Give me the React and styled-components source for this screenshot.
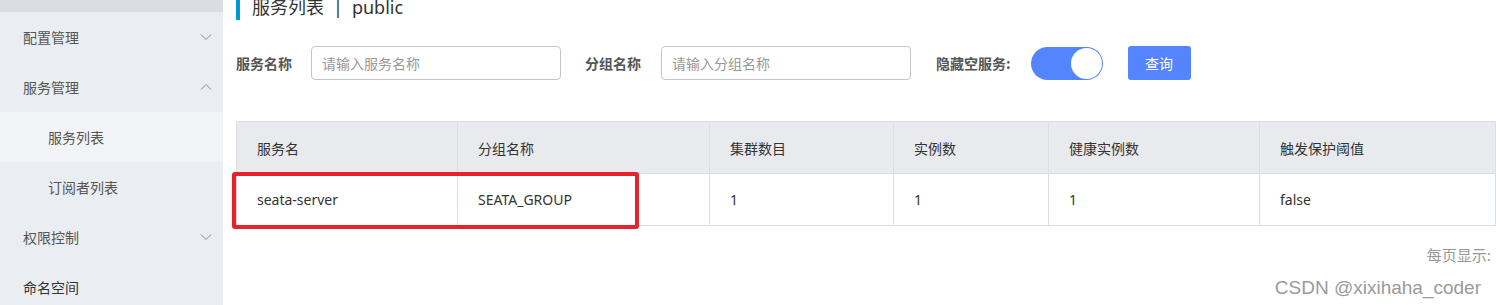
import React from "react";
import styled, { createGlobalStyle } from "styled-components";

const Global = createGlobalStyle`
  html, body { margin: 0; padding: 0; background: #fff; overflow: hidden; }
  body { font-family: "Noto Sans", "Noto Sans CJK SC", sans-serif; }
  * { box-sizing: border-box; }
`;

const Page = styled.div`
  display: flex;
  width: 1496px;
  height: 305px;
  position: relative;
  overflow: hidden;
`;

const Sidebar = styled.nav`
  width: 223px;
  flex: none;
  background: #eaedf1;
  display: flex;
  flex-direction: column;
`;

const SideTop = styled.div`
  height: 12px;
  flex: none;
  background: #dadee4;
`;

const SideItem = styled.div`
  height: 50px;
  flex: none;
  display: flex;
  align-items: center;
  justify-content: space-between;
  padding: 0 11px 0 ${(p) => (p.$sub ? 48 : 23)}px;
  font-size: 14px;
  color: ${(p) => (p.$strong ? "#333" : "#555")};
  background: ${(p) => (p.$active ? "#f2f3f6" : "transparent")};
  font-family: "Noto Sans CJK SC", sans-serif;
`;

const Chevron = ({ up }) => (
  <svg width="12" height="8" viewBox="0 0 12 8">
    <polyline
      points={up ? "1,6.5 6,1.5 11,6.5" : "1,1.5 6,6.5 11,1.5"}
      fill="none"
      stroke="#888"
      strokeWidth="1"
    />
  </svg>
);

const Main = styled.main`
  flex: 1;
  padding: 0 2px 0 13px;
  display: flex;
  flex-direction: column;
`;

const Title = styled.h1`
  margin: -3px 0 0;
  height: 23px;
  border-left: 4px solid #0099cc;
  padding-left: 12px;
  font-size: 18px;
  font-weight: normal;
  line-height: 21px;
  color: #333;
  font-family: "Noto Sans", "Noto Sans CJK SC", sans-serif;
  display: flex;
  gap: 9px;
`;

const Divider = styled.span`
  color: #333;
`;

const Filters = styled.div`
  display: flex;
  align-items: center;
  margin-top: 26px;
  height: 34px;
`;

const Label = styled.label`
  font-size: 14px;
  font-weight: bold;
  color: #555;
  font-family: "Noto Sans CJK SC", sans-serif;
  margin-right: ${(p) => p.$gap}px;
`;

const Input = styled.input`
  width: 250px;
  height: 34px;
  border: 1px solid #c4c6cf;
  border-radius: 4px;
  padding: 0 10px;
  font-size: 14px;
  font-family: "Noto Sans CJK SC", sans-serif;
  margin-right: ${(p) => p.$gap}px;
  outline: none;
  &::placeholder { color: #999; }
`;

const Switch = styled.div`
  width: 72px;
  height: 33px;
  border-radius: 17px;
  background: #5584ff;
  position: relative;
  margin-right: 25px;
  &::after {
    content: "";
    position: absolute;
    right: 1px;
    top: 1px;
    width: 31px;
    height: 31px;
    border-radius: 50%;
    background: #fff;
  }
`;

const Button = styled.button`
  width: 63px;
  height: 34px;
  border: none;
  border-radius: 3px;
  background: #5584ff;
  color: #fff;
  font-size: 14px;
  font-family: "Noto Sans CJK SC", sans-serif;
`;

const TableWrap = styled.div`
  position: relative;
  margin-top: 41px;
  width: 1259px;
`;

const Table = styled.table`
  border-collapse: collapse;
  width: 1259px;
  table-layout: fixed;
  font-size: 14px;
  color: #333;
`;

const Th = styled.th`
  height: 52px;
  background: #e9eaee;
  border: 1px solid #dcdee3;
  text-align: left;
  font-weight: normal;
  padding: 0 20px;
  font-family: "Noto Sans CJK SC", sans-serif;
  color: #333;
`;

const Td = styled.td`
  height: 52px;
  border: 1px solid #dcdee3;
  padding: 0 20px;
  color: #333;
`;

const Highlight = styled.div`
  position: absolute;
  left: -4px;
  top: 51px;
  width: 407px;
  height: 57px;
  border: 4px solid #e9212b;
  border-radius: 3px;
  pointer-events: none;
`;

const PageSize = styled.div`
  width: 1255px;
  text-align: right;
  margin-top: 18px;
  font-size: 15px;
  color: #999;
  font-family: "Noto Sans CJK SC", sans-serif;
`;

const Watermark = styled.div`
  position: absolute;
  right: 15px;
  bottom: 6px;
  font-family: "Liberation Sans", Arial, sans-serif;
  font-size: 19px;
  color: #9a9a9a;
`;

const cols = [221, 252, 184, 155, 211, 236];
const heads = ["服务名", "分组名称", "集群数目", "实例数", "健康实例数", "触发保护阈值"];
const row = ["seata-server", "SEATA_GROUP", "1", "1", "1", "false"];

export default function App() {
  return (
    <>
      <Global />
      <Page>
        <Sidebar>
          <SideTop />
          <SideItem>配置管理<Chevron /></SideItem>
          <SideItem>服务管理<Chevron up /></SideItem>
          <SideItem $sub $active>服务列表</SideItem>
          <SideItem $sub>订阅者列表</SideItem>
          <SideItem>权限控制<Chevron /></SideItem>
          <SideItem $strong>命名空间</SideItem>
        </Sidebar>
        <Main>
          <Title>
            <span>服务列表</span>
            <Divider>|</Divider>
            <span>public</span>
          </Title>
          <Filters>
            <Label $gap={19}>服务名称</Label>
            <Input $gap={24} placeholder="请输入服务名称" />
            <Label $gap={20}>分组名称</Label>
            <Input $gap={25} placeholder="请输入分组名称" />
            <Label $gap={20}>隐藏空服务:</Label>
            <Switch />
            <Button>查询</Button>
          </Filters>
          <TableWrap>
            <Table>
              <colgroup>
                {cols.map((w, i) => (
                  <col key={i} style={{ width: w }} />
                ))}
              </colgroup>
              <thead>
                <tr>
                  {heads.map((h) => (
                    <Th key={h}>{h}</Th>
                  ))}
                </tr>
              </thead>
              <tbody>
                <tr>
                  {row.map((c, i) => (
                    <Td key={i}>{c}</Td>
                  ))}
                </tr>
              </tbody>
            </Table>
            <Highlight />
          </TableWrap>
          <PageSize>每页显示:</PageSize>
        </Main>
        <Watermark>CSDN @xixihaha_coder</Watermark>
      </Page>
    </>
  );
}
